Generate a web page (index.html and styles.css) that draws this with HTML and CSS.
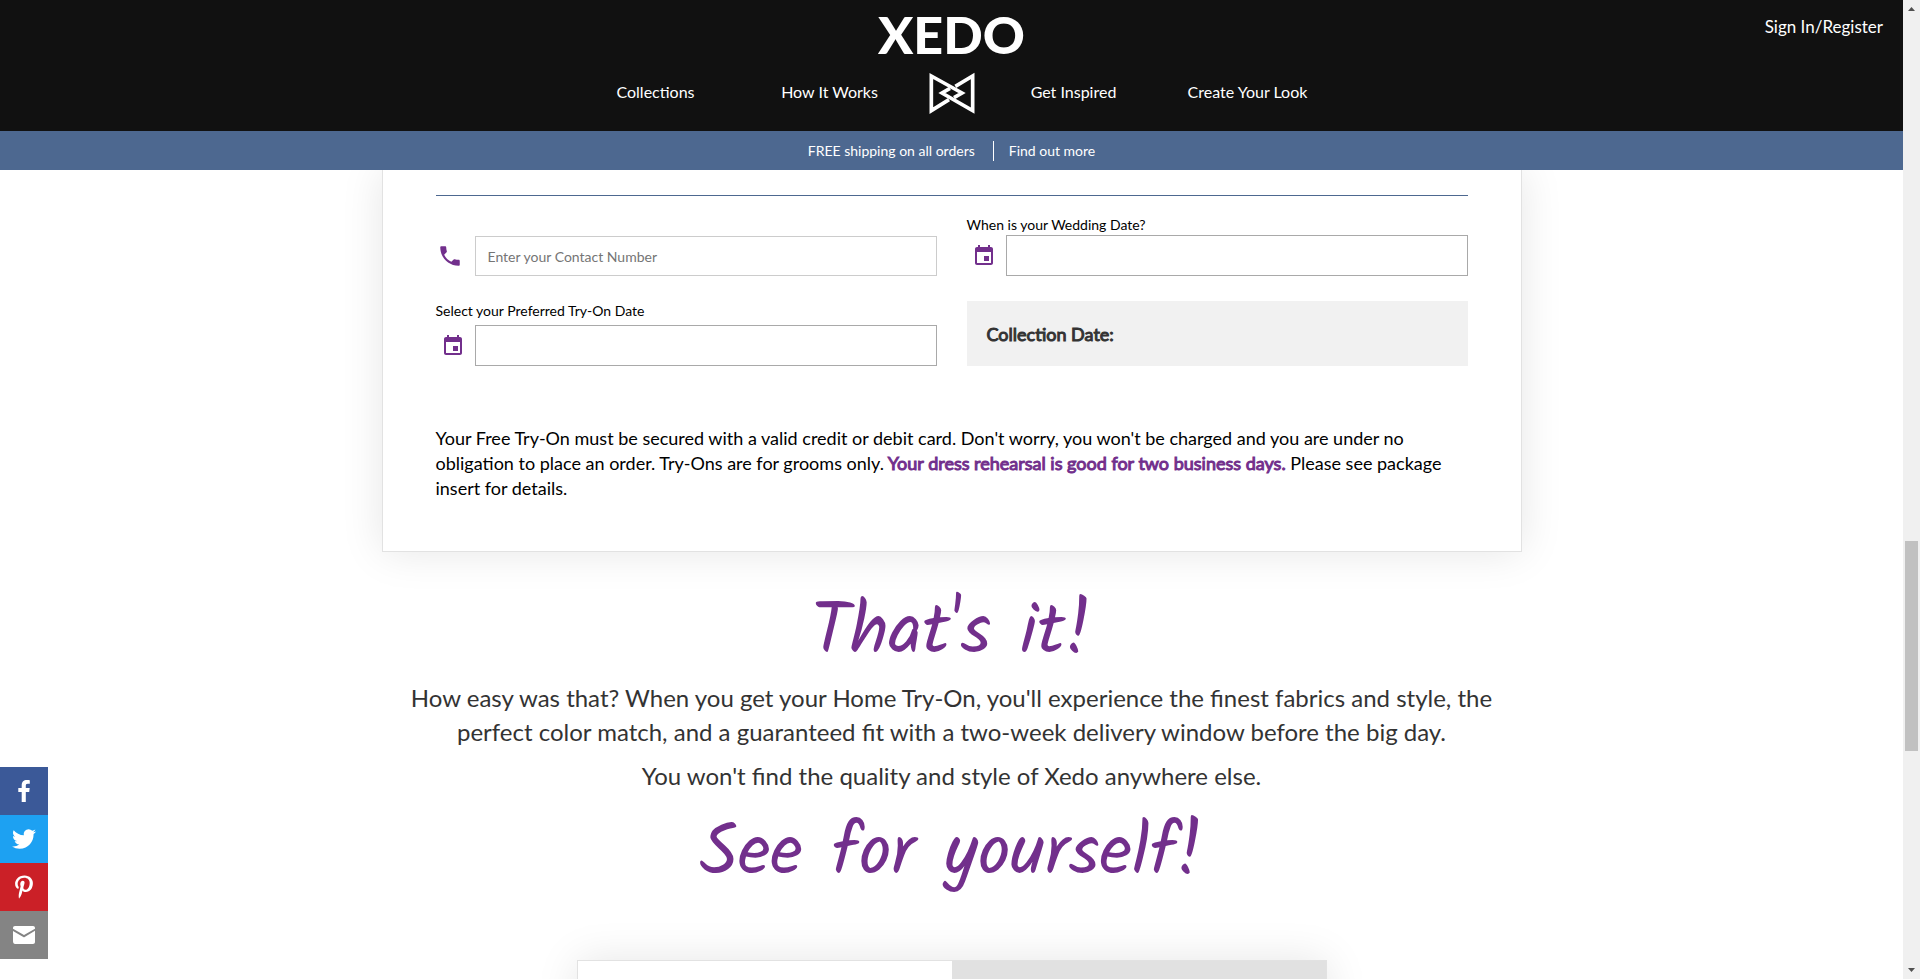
FILE: index.html
```html
<!DOCTYPE html>
<html lang="en">
<head>
<meta charset="utf-8">
<title>XEDO Home Try-On</title>
<link rel="stylesheet" href="styles.css">
</head>
<body>
<div class="page">
  <header class="header">
    <a class="account" href="#">Sign In/Register</a>
    <a class="logo" href="#">XEDO</a>
    <nav class="nav">
      <a href="#">Collections</a>
      <a href="#">How It Works</a>
      <a class="mark" href="#" aria-label="Home">
        <svg width="46" height="42" viewBox="0 0 138 126" fill="none" stroke="#fff" stroke-width="11" stroke-linejoin="miter">
          <path d="M79 43 L131 12 V116 L39 63 L63 49"/>
          <path d="M60 83 L7 116 V12 L99 63 L75 77"/>
        </svg>
      </a>
      <a href="#">Get Inspired</a>
      <a href="#">Create Your Look</a>
    </nav>
  </header>
  <div class="banner">
    <span class="banner-text">FREE shipping on all orders</span>
    <a class="banner-link" href="#">Find out more</a>
  </div>
  <main class="content">
    <form class="card">
      <div class="fields">
        <div class="field">
          <div class="row">
            <svg class="icon phone" width="26" height="26" viewBox="0 0 24 24"><path d="M6.62 10.79c1.44 2.83 3.76 5.14 6.59 6.59l2.2-2.2c.27-.27.67-.36 1.02-.24 1.12.37 2.33.57 3.57.57.55 0 1 .45 1 1V20c0 .55-.45 1-1 1-9.39 0-17-7.61-17-17 0-.55.45-1 1-1h3.5c.55 0 1 .45 1 1 0 1.25.2 2.45.57 3.57.11.35.03.74-.25 1.02l-2.2 2.2z"/></svg>
            <input class="input light" type="tel" placeholder="Enter your Contact Number" aria-label="Contact number">
          </div>
        </div>
        <div class="field">
          <label for="wedding">When is your Wedding Date?</label>
          <div class="row">
            <svg class="icon" width="24" height="24" viewBox="0 0 24 24"><path d="M17 12h-5v5h5v-5zM16 1v2H8V1H6v2H5c-1.11 0-1.99.9-1.99 2L3 19c0 1.1.89 2 2 2h14c1.1 0 2-.9 2-2V5c0-1.100-.9-2-2-2h-1V1h-2zm3 18H5V8h14v11z"/></svg>
            <input class="input" id="wedding" type="text">
          </div>
        </div>
        <div class="field second">
          <label for="tryon">Select your Preferred Try-On Date</label>
          <div class="row">
            <svg class="icon" width="24" height="24" viewBox="0 0 24 24"><path d="M17 12h-5v5h5v-5zM16 1v2H8V1H6v2H5c-1.11 0-1.99.9-1.99 2L3 19c0 1.1.89 2 2 2h14c1.1 0 2-.9 2-2V5c0-1.100-.9-2-2-2h-1V1h-2zm3 18H5V8h14v11z"/></svg>
            <input class="input" id="tryon" type="text">
          </div>
        </div>
        <div class="collection">Collection Date:</div>
      </div>
      <p class="terms">Your Free Try-On must be secured with a valid credit or debit card. Don't worry, you won't be charged and you are under no obligation to place an order. Try-Ons are for grooms only. <strong>Your dress rehearsal is good for two business days.</strong> Please see package insert for details.</p>
    </form>
    <section class="pitch">
      <h2>That's it!</h2>
      <p>How easy was that? When you get your Home Try-On, you'll experience the finest fabrics and style, the perfect color match, and a guaranteed fit with a two-week delivery window before the big day.</p>
      <p>You won't find the quality and style of Xedo anywhere else.</p>
      <h2>See for yourself!</h2>
    </section>
    <div class="panel"><div class="panel-left"></div><div class="panel-right"></div></div>
  </main>
  <aside class="share">
    <a class="facebook" href="#" aria-label="Facebook"><svg width="32" height="32" viewBox="0 0 32 32"><path d="M17.800 27V17h3.400l.5-3.900h-3.900v-2.500c0-1.100.3-1.900 1.900-1.900h2.100V5.200c-.4 0-1.600-.2-3-.2-3 0-5.100 1.800-5.100 5.200v2.900h-3.400V17h3.400v10z"/></svg></a>
    <a class="twitter" href="#" aria-label="Twitter"><svg width="32" height="32" viewBox="0 0 32 32"><path d="M28 8.557a10 10 0 0 1-2.828.775 4.930 4.930 0 0 0 2.166-2.725 9.700 9.700 0 0 1-3.130 1.194 4.920 4.920 0 0 0-3.593-1.550 4.924 4.924 0 0 0-4.794 6.049c-4.090-.210-7.720-2.170-10.150-5.150a4.940 4.940 0 0 0-.665 2.477c0 1.710.870 3.214 2.190 4.100a5 5 0 0 1-2.230-.616v.060c0 2.390 1.700 4.380 3.952 4.830-.414.115-.850.174-1.297.174q-.476-.001-.928-.086a4.935 4.935 0 0 0 4.600 3.420 9.900 9.900 0 0 1-6.114 2.107q-.597 0-1.175-.068a13.950 13.950 0 0 0 7.550 2.213c9.056 0 14.010-7.507 14.010-14.013q0-.320-.015-.637c.960-.695 1.795-1.560 2.455-2.550z"/></svg></a>
    <a class="pinterest" href="#" aria-label="Pinterest"><svg width="32" height="32" viewBox="0 0 32 32"><path d="M16.539 4.500c-6.277 0-9.442 4.500-9.442 8.253 0 2.272.860 4.293 2.705 5.046.303.125.574.005.662-.330.061-.231.205-.816.270-1.060.088-.331.053-.447-.191-.736-.532-.627-.873-1.439-.873-2.591 0-3.338 2.498-6.327 6.505-6.327 3.548 0 5.497 2.168 5.497 5.062 0 3.810-1.686 7.025-4.188 7.025-1.382 0-2.416-1.142-2.085-2.545.397-1.674 1.166-3.480 1.166-4.689 0-1.081-.581-1.983-1.782-1.983-1.413 0-2.548 1.462-2.548 3.419 0 1.247.421 2.091.421 2.091l-1.699 7.199c-.505 2.137-.076 4.755-.039 5.019.021.158.223.196.314.077.130-.170 1.813-2.247 2.384-4.324.162-.587.929-3.631.929-3.631.460.876 1.801 1.646 3.227 1.646 4.247 0 7.128-3.871 7.128-9.053.003-3.918-3.317-7.568-8.361-7.568z"/></svg></a>
    <a class="email" href="#" aria-label="Email"><svg width="32" height="32" viewBox="0 0 32 32"><path d="M27 21.775v-10L16.700 18a1.200 1.200 0 0 1-1.400 0L5 12v10.300C5 23.800 5.800 25 7.100 25h17.800c1.300 0 2.100-1 2.100-2.300zM5 9.800 16 16l11-6.200V9c0-1.200-.8-2-2-2H7C5.800 7 5 7.800 5 9z"/></svg></a>
  </aside>
</div>
<div class="scrollbar" aria-hidden="true">
  <svg class="arrow" width="17" height="17" viewBox="0 0 17 17"><path d="M5 11 8.500 7 12 11z"/></svg>
  <div class="thumb"></div>
  <svg class="arrow" width="17" height="17" viewBox="0 0 17 17"><path d="M5 6 8.500 10 12 6z"/></svg>
</div>
</body>
</html>
```
FILE: styles.css
```css
* { box-sizing: border-box; }
body {
  margin: 0;
  display: flex;
  height: 100vh;
  overflow: hidden;
  background: #fff;
  color: #000;
  font-family: Lato, "Liberation Sans", sans-serif;
}
a { color: inherit; text-decoration: none; }
.page { flex: 1; display: flex; flex-direction: column; min-width: 0; }
.header {
  position: relative;
  display: flex;
  flex-direction: column;
  align-items: center;
  padding: 4px 0 12px;
  background: #111;
  color: #fff;
  font-size: 16px;
}
.logo { font-size: 52px; font-weight: 900; line-height: 60px; }
.account { position: absolute; top: 15px; right: 20px; font-size: 17px; line-height: 24px; }
.nav {
  display: grid;
  grid-template-columns: 174px 174px 70px 174px 174px;
  align-items: center;
  justify-items: center;
  height: 55px;
}
.mark { padding-top: 2px; }
.mark svg { display: block; }
.banner {
  display: flex;
  justify-content: center;
  align-items: center;
  height: 39px;
  background: #4d6890;
  color: #fff;
  font-size: 14px;
  line-height: 20px;
}
.banner-text { padding-right: 18px; border-right: 1px solid #fff; }
.banner-link { padding-left: 15px; }
.content { flex: 1; min-height: 0; overflow: hidden; }
.card {
  max-width: 1140px;
  margin: 0 auto;
  padding: 25px 53px 50px;
  border: 1px solid #e2e2e2;
  border-top: 0;
  background: #fff;
  box-shadow: 0 0 40px rgba(0, 0, 0, .1);
}
.fields {
  display: grid;
  grid-template-columns: 1fr 1fr;
  column-gap: 30px;
  border-top: 1px solid #4d6890;
  padding-top: 19px;
}
.field { display: flex; flex-direction: column; justify-content: flex-end; }
.field label { font-size: 14px; line-height: 20px; }
.second { margin-top: 25px; }
.second label { padding-bottom: 4px; }
.row { display: flex; align-items: center; }
.icon { margin: 0 10px 0 5px; fill: #722f8c; }
.phone { margin: 0 12px 0 1px; }
.input {
  flex: 1;
  min-width: 0;
  height: 41px;
  border: 1px solid #a9a9a9;
  padding: 0 12px;
  font: 14px Lato, "Liberation Sans", sans-serif;
}
.light { height: 40px; border-color: #ccc; }
.light::placeholder { color: #757575; }
.collection {
  margin-top: 25px;
  display: flex;
  align-items: center;
  padding: 0 20px;
  background: #f1f1f1;
  color: #333;
  font-size: 18px;
  -webkit-text-stroke: 1px #333;
}
.terms { margin: 60px 0 0; font-size: 18px; line-height: 25px; }
.terms strong { font-weight: 400; color: #722f8c; -webkit-text-stroke: 1px #722f8c; }
.pitch { max-width: 1110px; margin: 0 auto; text-align: center; color: #333; }
.pitch h2 {
  margin: 0;
  color: #722f8c;
  font-family: Kalam, "Caveat Brush", cursive;
  font-size: 72px;
  font-weight: 400;
  line-height: 80px;
  padding-top: 42px;
  padding-bottom: 7px;
}
.pitch h2:last-child { padding-top: 12px; }
.pitch p { margin: 0 0 10px; font-size: 24px; line-height: 34px; }
.panel {
  display: flex;
  max-width: 750px;
  height: 300px;
  margin: 58px auto 0;
  border: 1px solid #e2e2e2;
  box-shadow: 0 0 40px rgba(0, 0, 0, .1);
}
.panel-left { flex: 1; background: #fff; }
.panel-right { flex: 1; background: #e1e1e1; }
.share { position: fixed; left: 0; bottom: 20px; width: 48px; }
.share a { display: flex; align-items: center; justify-content: center; height: 48px; }
.share svg { fill: #fff; }
.facebook { background: #3b5998; }
.twitter { background: #1da1f2; }
.pinterest { background: #cb2027; }
.email { background: #848484; }
.scrollbar { width: 17px; display: grid; grid-template-rows: 17px 524fr 210fr 211fr 17px; background: #f0f0f0; }
.thumb { grid-row: 3; margin: 0 2px; background: #c1c1c1; }
.arrow { display: block; fill: #505050; }
.arrow:last-child { grid-row: 5; }
```
